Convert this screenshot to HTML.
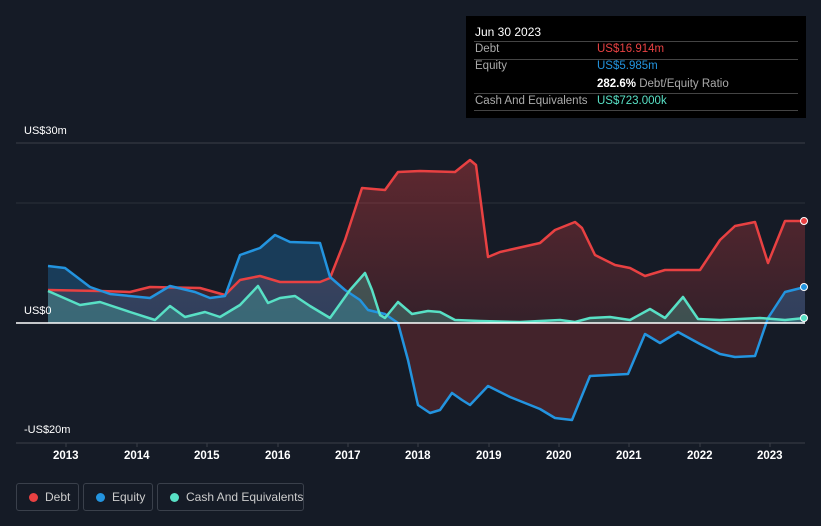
<!DOCTYPE html><html><head><style>
body{margin:0;background:#151b26;width:821px;height:526px;overflow:hidden;font-family:"Liberation Sans",sans-serif;position:relative}
.tt{position:absolute;left:466px;top:16px;width:340px;height:102px;background:#000;color:#fff;font-size:11.5px}
.tt .r{position:absolute;left:8px;right:8px;border-top:1px solid #444}
.lab{color:#aaa}
.leg{position:absolute;top:483px;height:28px;border:1px solid #3a404b;border-radius:3px;color:#ccc;font-size:12px;line-height:26px;box-sizing:border-box;white-space:nowrap}
.leg i{position:absolute;left:12px;top:9px;width:9px;height:9px;border-radius:50%}
.leg span{position:absolute;left:28px}
.ax{position:absolute;color:#fff;font-size:11px;white-space:nowrap}
.yr{position:absolute;color:#fff;font-size:11.5px;font-weight:bold;top:450px}
</style></head><body>
<svg width="821" height="526" style="position:absolute;left:0;top:0">
<defs>
<linearGradient id="gd" x1="0" y1="0" x2="0" y2="1"><stop offset="0" stop-color="#e84142" stop-opacity=".35"/><stop offset="1" stop-color="#e84142" stop-opacity=".15"/></linearGradient>
<clipPath id="up"><rect x="0" y="0" width="821" height="323"/></clipPath>
<clipPath id="dn"><rect x="0" y="323" width="821" height="200"/></clipPath>
</defs>
<line x1="16" y1="143" x2="805" y2="143" stroke="#3a3f48"/>
<line x1="16" y1="203" x2="805" y2="203" stroke="#2c313b"/>
<line x1="16" y1="443" x2="805" y2="443" stroke="#3a3f48"/>
<g stroke="#3a3f48"><line x1="66" y1="443" x2="66" y2="447"/><line x1="137" y1="443" x2="137" y2="447"/><line x1="207" y1="443" x2="207" y2="447"/><line x1="278" y1="443" x2="278" y2="447"/><line x1="348" y1="443" x2="348" y2="447"/><line x1="418" y1="443" x2="418" y2="447"/><line x1="489" y1="443" x2="489" y2="447"/><line x1="559" y1="443" x2="559" y2="447"/><line x1="629" y1="443" x2="629" y2="447"/><line x1="700" y1="443" x2="700" y2="447"/><line x1="770" y1="443" x2="770" y2="447"/></g>
<path d="M48,290 L100,291 130,292 150,287 200,288 225,295 240,280 260,276 280,282 320,282 330,278 345,240 362,188 385,190 398,172 420,171 455,172 470,160 476,165 488,257 500,252 540,243 555,230 575,222 582,228 595,255 615,265 630,268 645,276 665,270 700,270 720,240 735,226 755,222 768,263 785,221 805,221 L805,323 L48,323Z" fill="url(#gd)"/>
<g id="eq"><path clip-path="url(#up)" d="M48,266 L65,268 90,287 110,294 150,298 170,286 195,292 210,298 225,296 240,255 260,248 275,235 290,242 320,243 330,277 345,290 360,300 368,310 385,314 398,323 408,360 418,405 430,413 440,410 452,393 462,400 470,405 488,386 510,397 540,409 555,418 572,420 590,376 628,374 645,334 660,343 678,332 700,344 720,354 735,357 755,356 768,318 785,292 805,287 L805,323 L48,323Z" fill="#2394df" fill-opacity=".28"/>
<path clip-path="url(#dn)" d="M48,266 L65,268 90,287 110,294 150,298 170,286 195,292 210,298 225,296 240,255 260,248 275,235 290,242 320,243 330,277 345,290 360,300 368,310 385,314 398,323 408,360 418,405 430,413 440,410 452,393 462,400 470,405 488,386 510,397 540,409 555,418 572,420 590,376 628,374 645,334 660,343 678,332 700,344 720,354 735,357 755,356 768,318 785,292 805,287 L805,323 L48,323Z" fill="#e84142" fill-opacity=".22"/></g>
<path d="M48,291 L80,305 100,302 130,312 155,320 170,306 185,317 205,312 220,317 240,305 258,286 268,303 280,298 295,296 310,306 330,318 350,290 365,273 372,290 380,315 385,318 398,302 412,314 428,311 440,312 455,320 480,321 520,322 560,320 575,322 590,318 610,317 630,320 650,309 665,318 683,297 698,319 720,320 760,318 785,320 805,318 L805,323 L48,323Z" fill="#58e0c5" fill-opacity=".25"/>
<g fill="none" stroke-width="2.5" stroke-linejoin="round">
<path d="M48,290 L100,291 130,292 150,287 200,288 225,295 240,280 260,276 280,282 320,282 330,278 345,240 362,188 385,190 398,172 420,171 455,172 470,160 476,165 488,257 500,252 540,243 555,230 575,222 582,228 595,255 615,265 630,268 645,276 665,270 700,270 720,240 735,226 755,222 768,263 785,221 805,221" stroke="#e84142"/>
<path d="M48,266 L65,268 90,287 110,294 150,298 170,286 195,292 210,298 225,296 240,255 260,248 275,235 290,242 320,243 330,277 345,290 360,300 368,310 385,314 398,323 408,360 418,405 430,413 440,410 452,393 462,400 470,405 488,386 510,397 540,409 555,418 572,420 590,376 628,374 645,334 660,343 678,332 700,344 720,354 735,357 755,356 768,318 785,292 805,287" stroke="#2394df"/>
<path d="M48,291 L80,305 100,302 130,312 155,320 170,306 185,317 205,312 220,317 240,305 258,286 268,303 280,298 295,296 310,306 330,318 350,290 365,273 372,290 380,315 385,318 398,302 412,314 428,311 440,312 455,320 480,321 520,322 560,320 575,322 590,318 610,317 630,320 650,309 665,318 683,297 698,319 720,320 760,318 785,320 805,318" stroke="#58e0c5"/>
</g>
<line x1="16" y1="323" x2="805" y2="323" stroke="#fff" stroke-width="1.5"/>
<circle cx="804" cy="221" r="3.5" fill="#e84142" stroke="#fff"/>
<circle cx="804" cy="287" r="3.5" fill="#2394df" stroke="#fff"/>
<circle cx="804" cy="318" r="3.5" fill="#58e0c5" stroke="#fff"/>
</svg>
<div class="ax" style="left:24px;top:125px">US$30m</div>
<div class="ax" style="left:24px;top:305px">US$0</div>
<div class="ax" style="left:24px;top:424px">-US$20m</div>
<div class="yr" style="left:53px">2013</div><div class="yr" style="left:124px">2014</div><div class="yr" style="left:194px">2015</div><div class="yr" style="left:265px">2016</div><div class="yr" style="left:335px">2017</div><div class="yr" style="left:405px">2018</div><div class="yr" style="left:476px">2019</div><div class="yr" style="left:546px">2020</div><div class="yr" style="left:616px">2021</div><div class="yr" style="left:687px">2022</div><div class="yr" style="left:757px">2023</div>
<div class="tt">
<div style="position:absolute;left:9px;top:9px;font-size:12px">Jun 30 2023</div>
<div class="r" style="top:25px"></div>
<div class="lab" style="position:absolute;left:9px;top:27px">Debt</div><div style="position:absolute;left:131px;top:27px;color:#e84142">US$16.914m</div>
<div class="r" style="top:43px"></div>
<div class="lab" style="position:absolute;left:9px;top:44px">Equity</div><div style="position:absolute;left:131px;top:44px;color:#2394df">US$5.985m</div>
<div style="position:absolute;left:131px;top:62px"><b>282.6%</b> <span class="lab">Debt/Equity Ratio</span></div>
<div class="r" style="top:77px"></div>
<div class="lab" style="position:absolute;left:9px;top:79px">Cash And Equivalents</div><div style="position:absolute;left:131px;top:79px;color:#58e0c5">US$723.000k</div>
<div class="r" style="top:94px"></div>
</div>
<div class="leg" style="left:16px;width:63px"><i style="background:#e84142"></i><span>Debt</span></div>
<div class="leg" style="left:83px;width:70px"><i style="background:#2394df"></i><span>Equity</span></div>
<div class="leg" style="left:157px;width:147px"><i style="background:#58e0c5"></i><span>Cash And Equivalents</span></div>
</body></html>
